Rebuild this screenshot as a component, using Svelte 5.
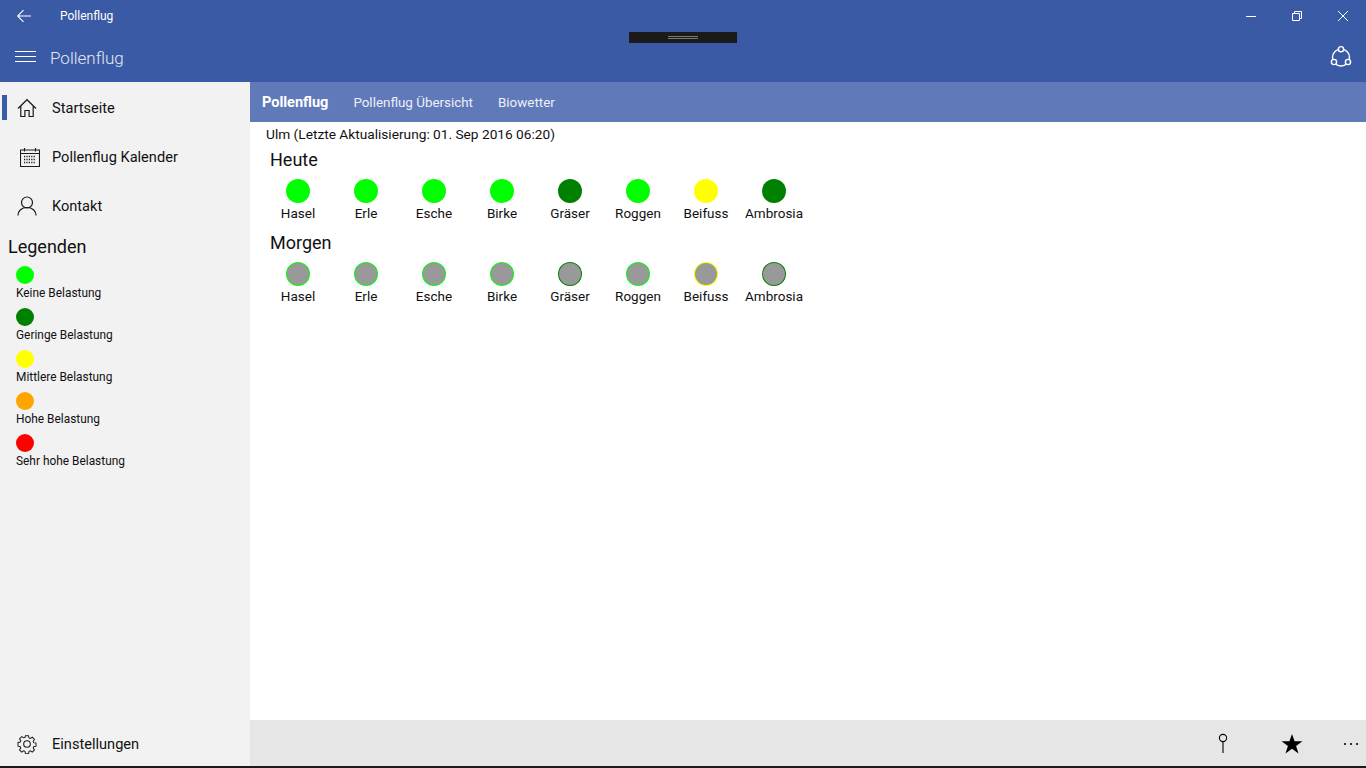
<script lang="ts">
  const plants = ['Hasel', 'Erle', 'Esche', 'Birke', 'Gräser', 'Roggen', 'Beifuss', 'Ambrosia'];
  const none = '#00ff00';
  const low = '#008000';
  const mid = '#ffff00';
  const today = [none, none, none, none, low, none, mid, low];

  const legend = [
    { label: 'Keine Belastung', color: none },
    { label: 'Geringe Belastung', color: low },
    { label: 'Mittlere Belastung', color: mid },
    { label: 'Hohe Belastung', color: '#ffa500' },
    { label: 'Sehr hohe Belastung', color: '#ff0000' }
  ];

  const tabs = ['Pollenflug', 'Pollenflug Übersicht', 'Biowetter'];
</script>

<div class="app">
  <header class="titlebar">
    <svg class="back" width="16" height="16" viewBox="0 0 16 16" fill="none" stroke="#fff" stroke-width="1.1">
      <path d="M15 8H2M7.5 2.2 1.7 8l5.8 5.8" />
    </svg>
    <span class="apptitle">Pollenflug</span>
    <div class="winbtns">
      <svg width="46" height="32" viewBox="0 0 46 32" fill="none" stroke="#fff"><path d="M18 16.5h10" /></svg>
      <svg width="46" height="32" viewBox="0 0 46 32" fill="none" stroke="#fff"><path d="M18.5 13.5h7v7h-7zM20.5 13.5v-2h7v7h-2" /></svg>
      <svg width="46" height="32" viewBox="0 0 46 32" fill="none" stroke="#fff"><path d="M18 11l10 10M28 11 18 21" /></svg>
    </div>
  </header>

  <div class="header">
    <svg class="burger" width="22" height="12" viewBox="0 0 22 12" stroke="#fff"><path d="M0 .5h21M0 5.5h21M0 10.5h21" /></svg>
    <span class="pagetitle">Pollenflug</span>
    <svg class="share" width="24" height="24" viewBox="0 0 24 24" fill="none" stroke="#fff" stroke-width="1.4">
      <circle cx="12" cy="12.500" r="8.500" />
      <g fill="#3a5aa5">
        <circle cx="12" cy="4.200" r="2.600" />
        <circle cx="5" cy="17" r="2.600" />
        <circle cx="19" cy="17" r="2.600" />
      </g>
    </svg>
  </div>

  <div class="grip"><span></span><span></span></div>

  <div class="body">
    <aside class="sidebar">
      <nav class="nav">
        <div class="navitem active">
          <svg width="20" height="20" viewBox="0 0 20 20" fill="none" stroke="#1a1a1a" stroke-width="1.2">
            <path d="M1 10.500 10 1.700l9 8.800M3.800 8v10.500h4.100v-6h4.200v6h4.100V8" />
          </svg>
          <span>Startseite</span>
        </div>
        <div class="navitem cal">
          <svg width="20" height="20" viewBox="0 0 20 20" fill="none" stroke="#1a1a1a" stroke-width="1.1">
            <path d="M.5 3h19v16.500H.5zM.5 6.500h19M4.500 1v3.500M15.500 1v3.500" />
            <path d="M4 9.500h12M4 12.500h12M4 15.500h12" stroke-width="1.300" stroke-dasharray="1.200 1.200" />
          </svg>
          <span>Pollenflug Kalender</span>
        </div>
        <div class="navitem">
          <svg width="20" height="20" viewBox="0 0 20 20" fill="none" stroke="#1a1a1a" stroke-width="1.2">
            <circle cx="10" cy="6.500" r="5.500" />
            <path d="M1 19.500c0-4.800 3.600-8 9-8s9 3.200 9 8" />
          </svg>
          <span>Kontakt</span>
        </div>
      </nav>

      <h2 class="legendtitle">Legenden</h2>
      <ul class="legend">
        {#each legend as item}
          <li>
            <i class="dot" style="background: {item.color}"></i>
            <span>{item.label}</span>
          </li>
        {/each}
      </ul>

      <div class="navitem settings">
        <svg width="20" height="20" viewBox="0 0 20 20" fill="none" stroke="#1a1a1a" stroke-width="1.1">
          <circle cx="10" cy="10" r="3.300" />
          <path d="M8.300.8h3.400l.5 2.500 1.500.6 2.100-1.400 2.400 2.400-1.400 2.100.6 1.500 2.500.5v3.400l-2.500.5-.6 1.500 1.400 2.100-2.400 2.400-2.100-1.400-1.500.6-.5 2.500H8.300l-.5-2.500-1.500-.6-2.100 1.400-2.400-2.400 1.400-2.100-.6-1.500-2.500-.5V8.300l2.500-.5.6-1.500-1.400-2.100 2.400-2.400 2.100 1.400 1.500-.6z" transform="translate(.9 .9) scale(.91)" />
        </svg>
        <span>Einstellungen</span>
      </div>
    </aside>

    <main class="main">
      <div class="tabs">
        {#each tabs as tab, i}
          <span class="tab" class:current={i === 0}>{tab}</span>
        {/each}
      </div>

      <div class="content">
        <p class="updated">Ulm (Letzte Aktualisierung: 01. Sep 2016 06:20)</p>

        <h2 class="day">Heute</h2>
        <div class="row">
          {#each plants as plant, i}
            <div class="cell">
              <i class="circle" style="background: {today[i]}"></i>
              <span>{plant}</span>
            </div>
          {/each}
        </div>

        <h2 class="day morgen">Morgen</h2>
        <div class="row">
          {#each plants as plant, i}
            <div class="cell">
              <i class="circle" style="background: {today[i]}"><b></b></i>
              <span>{plant}</span>
            </div>
          {/each}
        </div>
      </div>

      <div class="appbar">
        <svg class="pin" width="12" height="20" viewBox="0 0 12 20" fill="none" stroke="#000" stroke-width="1.1">
          <circle cx="6" cy="5" r="3.600" />
          <path d="M6 8.500V20" />
        </svg>
        <svg class="star" width="22" height="20" viewBox="0 0 22 20" fill="#000">
          <path d="M11 0l2.600 7.300h7.800l-6.300 4.600 2.400 7.500L11 14.800l-6.500 4.600 2.400-7.500L.6 7.300h7.800z" />
        </svg>
        <span class="more"><i></i><i></i><i></i></span>
      </div>
    </main>
  </div>
</div>

<style>
  :global(body) {
    margin: 0;
    background: #1a1a1a;
  }

  .app {
    position: relative;
    width: 1366px;
    height: 766px;
    overflow: hidden;
    display: flex;
    flex-direction: column;
    font-family: Roboto, 'Noto Sans', sans-serif;
    color: #000;
    background: #fff;
  }

  .titlebar {
    height: 32px;
    flex: none;
    display: flex;
    align-items: center;
    background: #3a5aa5;
    color: #fff;
  }

  .back {
    margin-left: 16px;
  }

  .apptitle {
    margin-left: 28px;
    font-size: 12px;
  }

  .winbtns {
    margin-left: auto;
    display: flex;
  }

  .winbtns svg {
    display: block;
  }

  .header {
    height: 50px;
    flex: none;
    display: flex;
    align-items: center;
    background: #3a5aa5;
  }

  .burger {
    margin-left: 15px;
  }

  .pagetitle {
    margin-left: 13px;
    padding-top: 1px;
    font-size: 17px;
    font-weight: 300;
    color: #e4e8f3;
  }

  .share {
    margin-left: auto;
    margin-right: 13px;
  }

  .grip {
    position: absolute;
    left: 629px;
    top: 32px;
    width: 108px;
    height: 11px;
    background: #1a1a1a;
    display: flex;
    flex-direction: column;
    align-items: center;
    justify-content: center;
    gap: 1px;
  }

  .grip span {
    width: 30px;
    height: 1px;
    background: #777;
  }

  .body {
    flex: 1;
    min-height: 0;
    display: flex;
  }

  .sidebar {
    width: 250px;
    flex: none;
    display: flex;
    flex-direction: column;
    background: #f2f2f2;
  }

  .nav {
    padding-top: 1px;
  }

  .navitem {
    position: relative;
    height: 49px;
    display: flex;
    align-items: center;
    gap: 15px;
    padding-left: 17px;
    font-size: 14.600px;
    line-height: 20px;
    color: #111;
  }

  .navitem.cal {
    padding-left: 20px;
    gap: 12px;
  }

  .navitem.active::before {
    content: '';
    position: absolute;
    left: 2px;
    top: 12px;
    width: 5px;
    height: 25px;
    background: #3a5aa5;
  }

  .legendtitle {
    margin: 5px 0 0 8px;
    font-size: 18px;
    line-height: 24px;
    font-weight: 400;
    color: #111;
  }

  .legend {
    list-style: none;
    margin: 7px 0 0 16px;
    padding: 0;
  }

  .legend li {
    height: 42px;
    font-size: 11.900px;
    line-height: 16px;
    color: #111;
  }

  .dot {
    display: block;
    width: 18px;
    height: 18px;
    border-radius: 50%;
    margin-bottom: 1px;
  }

  .settings {
    margin-top: auto;
    margin-bottom: -2px;
  }

  .main {
    flex: 1;
    min-width: 0;
    display: flex;
    flex-direction: column;
  }

  .tabs {
    height: 40px;
    flex: none;
    display: flex;
    align-items: center;
    gap: 25px;
    padding-left: 12px;
    background: #6079b9;
    color: #fff;
    font-size: 13.400px;
  }

  .tab {
    color: #eef0f7;
  }

  .tab.current {
    color: #fff;
    font-size: 14.500px;
    font-weight: 700;
  }

  .content {
    flex: 1;
    padding: 3px 0 0 16px;
  }

  .updated {
    margin: 0;
    font-size: 13.700px;
    line-height: 18px;
    color: #111;
  }

  .day {
    margin: 5px 0 0 4px;
    font-size: 18px;
    line-height: 24px;
    font-weight: 400;
    color: #111;
  }

  .morgen {
    margin-top: 9px;
  }

  .row {
    display: flex;
    margin: 7px 0 0 -2px;
  }

  .cell {
    width: 68px;
    display: flex;
    flex-direction: column;
    align-items: center;
    font-size: 13.500px;
    line-height: 18px;
    color: #111;
  }

  .circle {
    display: block;
    position: relative;
    width: 24px;
    height: 24px;
    border-radius: 50%;
    margin-bottom: 1px;
  }

  .circle b {
    position: absolute;
    inset: 0.600px;
    border-radius: 50%;
    background: #999;
  }

  .appbar {
    height: 46px;
    flex: none;
    display: flex;
    align-items: center;
    background: #e6e6e6;
  }

  .pin {
    margin-left: auto;
  }

  .star {
    margin-left: 52px;
    margin-top: 2px;
  }

  .more {
    display: flex;
    gap: 4px;
    margin: 2px 8px 0 41px;
  }

  .more i {
    width: 2px;
    height: 2px;
    background: #333;
  }
</style>
